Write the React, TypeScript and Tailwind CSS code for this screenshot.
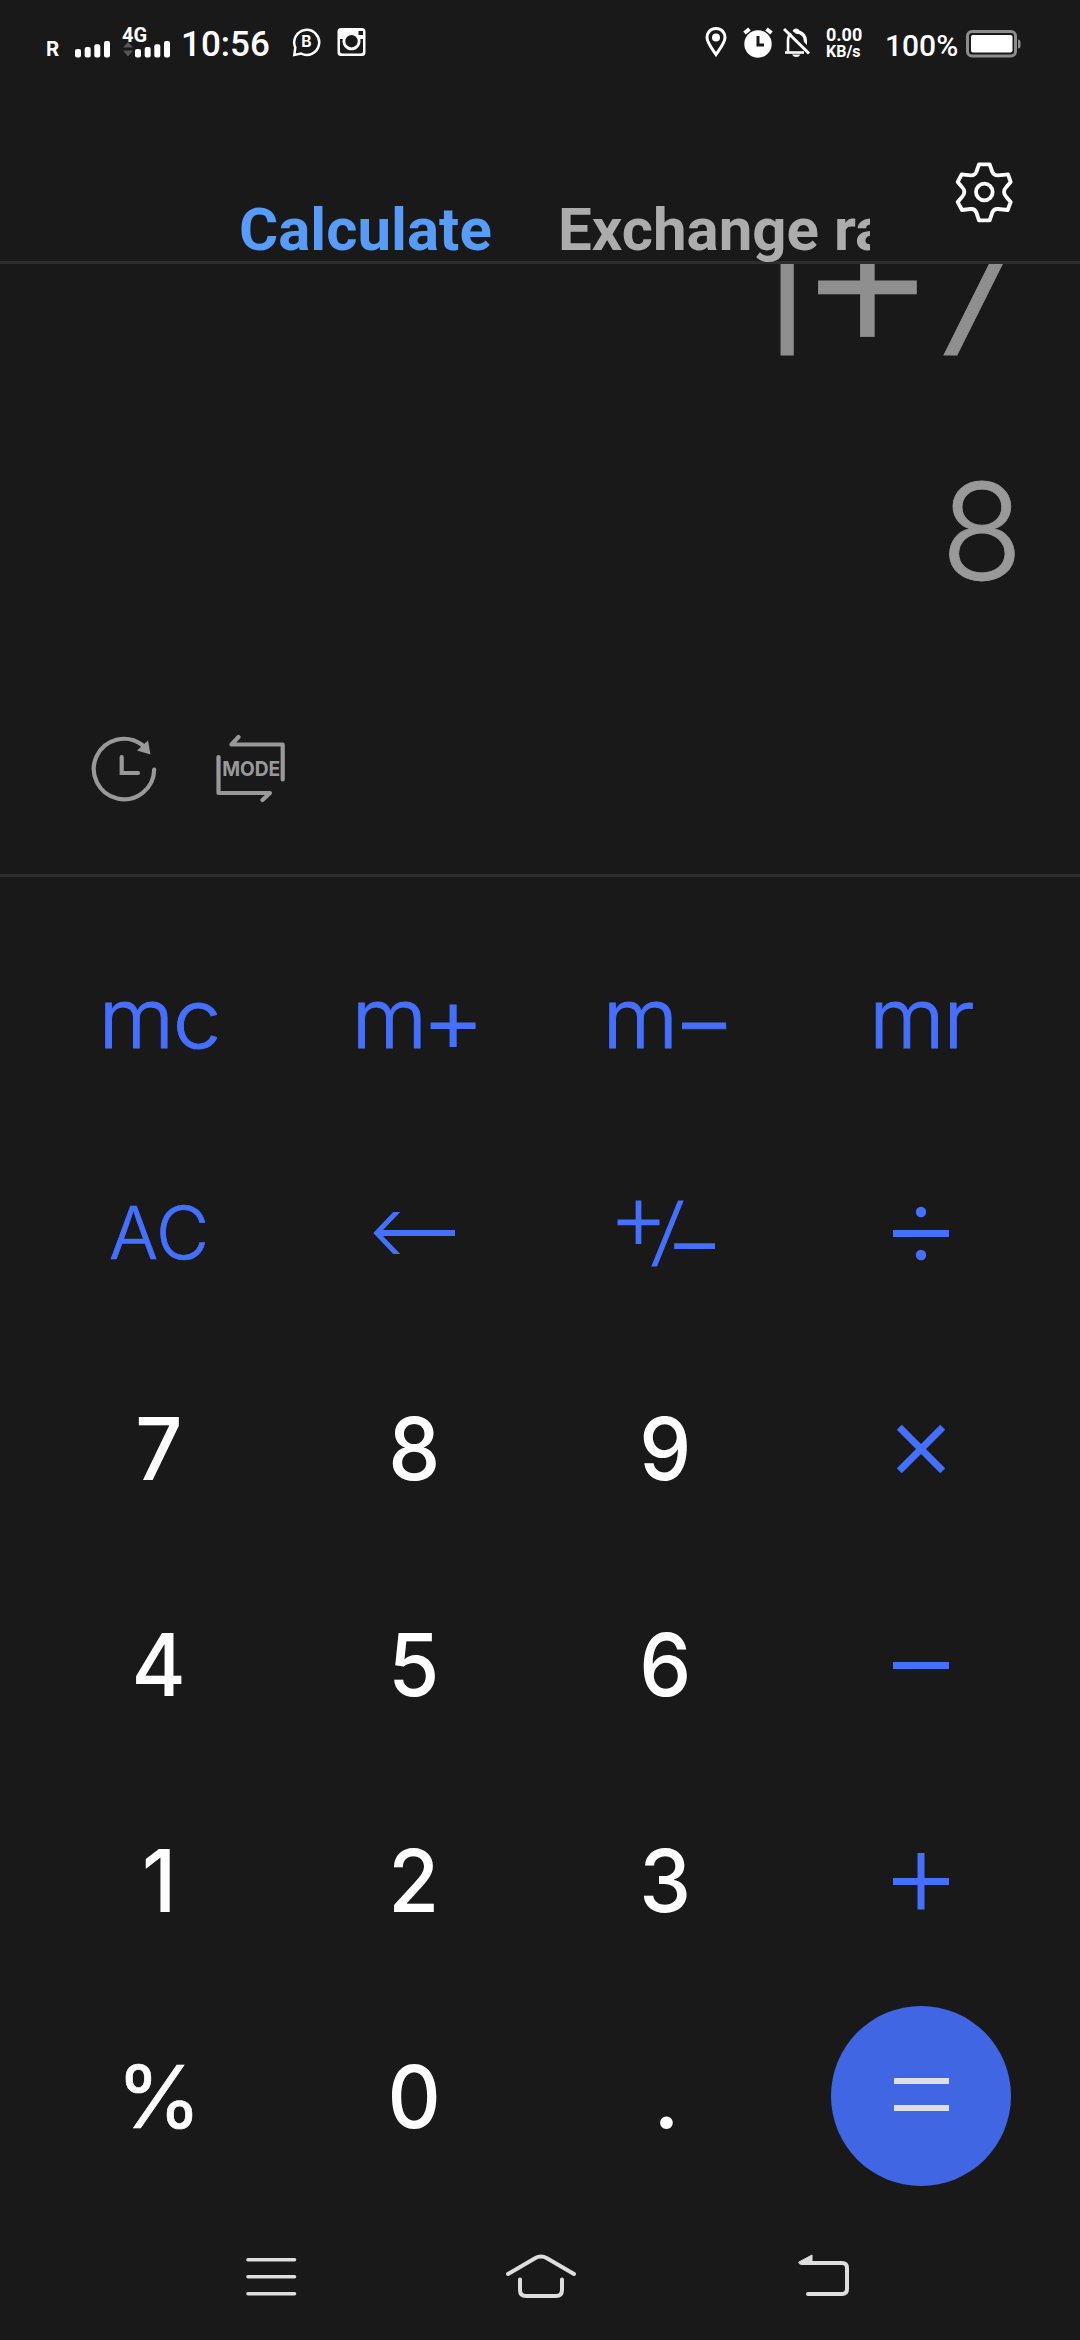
import type { ReactNode } from "react";

function SignalBars() {
  return (
    <svg className="h-[18px] w-[36px] fill-white" viewBox="0 0 36 18">
      <rect x="0" y="9" width="6" height="8.5" rx="2" />
      <rect x="9.7" y="7" width="6" height="10.5" rx="2" />
      <rect x="19.3" y="4.300" width="6" height="13.2" rx="2" />
      <rect x="29" y="1" width="6" height="16.500" rx="2" />
    </svg>
  );
}

function StatusBar() {
  return (
    <div className="flex h-[84px] items-start font-['Roboto',sans-serif] text-white">
      <span className="ml-[46px] mt-[39px] w-[29px] font-['Inter',sans-serif] text-[20px] font-bold leading-[20px]">R</span>
      <div className="mt-[39.500px] w-[47px]">
        <SignalBars />
      </div>
      <div className="mt-[25px] flex w-[59px] flex-col">
        <span className="h-[16px] whitespace-nowrap text-[20px] font-bold leading-[20px]">4G</span>
        <div className="-mt-[1px] flex">
          <svg className="h-[18px] w-[13px] fill-[#555]" viewBox="0 0 13 18">
            <path d="M6 2L11 7.500H1ZM6 16.500L11 10.500H1Z" />
          </svg>
          <SignalBars />
        </div>
      </div>
      <span className="mt-[24px] w-[111px] whitespace-nowrap text-[35px] font-medium leading-[41px]">10:56</span>
      <svg className="mt-[27px] h-[30px] w-[45px]" viewBox="0 0 45 30" fill="none" stroke="white" strokeWidth="2.500">
        <path d="M2.300 28L3.300 20.500A12.500 12.500 0 1 1 9 26.500Z" />
        <text x="14.5" y="20" textAnchor="middle" fontSize="15.500" fontWeight="700" fontFamily="Inter" fill="white" stroke="none">B</text>
      </svg>
      <svg className="mt-[27px] h-[30px] w-[30px]" viewBox="0 0 30 30">
        <path fillRule="evenodd" fill="white" d="M4 1H25Q28.500 1 28.500 4.500V25.500Q28.500 29 25 29H4Q0.500 29 0.500 25.500V4.500Q0.500 1 4 1ZM3 12V24Q3 26.500 5.500 26.500H23.500Q26 26.500 26 24V12H23.200A9 9 0 1 1 5.800 12ZM14.500 8A6.200 6.200 0 1 0 14.500 20.400A6.200 6.200 0 1 0 14.500 8ZM21.500 4V8H26V4Z" />
      </svg>
      <svg className="ml-auto mt-[26px] h-[32px] w-[38px]" viewBox="0 0 38 32">
        <path d="M11 2.500C5.500 2.500 2 6.500 2 11.300C2 17 7 22.500 11 28.500C15 22.500 20 17 20 11.300C20 6.500 16.500 2.500 11 2.500Z" fill="none" stroke="white" strokeWidth="3" />
        <circle cx="11" cy="11.500" r="4" fill="white" />
      </svg>
      <svg className="mt-[27px] h-[31px] w-[40px]" viewBox="0 0 40 31">
        <circle cx="15" cy="17" r="13.700" fill="white" />
        <path d="M1.500 6L6.500 2M23.500 2L28.500 6" stroke="white" strokeWidth="4" />
        <path d="M15 9V18H21" fill="none" stroke="#191919" strokeWidth="3" />
      </svg>
      <svg className="mt-[27px] h-[31px] w-[43px]" viewBox="0 0 43 31" fill="none" stroke="white" strokeWidth="2.600">
        <path d="M5 24.500V13Q5 9 8 6.500" />
        <path d="M2 25.500H21" />
        <path d="M1 2L26 26.500" strokeWidth="3" />
        <path d="M9 27.500H17.500Q16 30 13.200 30Q10.500 30 9 27.500Z" fill="white" stroke="none" />
        <path d="M9.500 4Q10.500 1.500 13 1.500T16.500 3.500Q23.800 6 24 13.500V18L21 15Q21 7 13 6.800Z" fill="white" stroke="none" />
      </svg>
      <div className="mt-[26px] flex w-[59px] flex-col whitespace-nowrap font-bold">
        <span className="text-[18px] leading-[18px]">0.00</span>
        <span className="text-[16px] leading-[16px]">KB/s</span>
      </div>
      <span className="mt-[28px] w-[81px] whitespace-nowrap text-[30px] font-medium leading-[36px]">100%</span>
      <svg className="mr-[58px] mt-[30px] h-[28px] w-[56px]" viewBox="0 0 56 28">
        <rect x="1.500" y="1.500" width="48" height="24.500" rx="4.500" fill="none" stroke="#8c8c8c" strokeWidth="3" />
        <rect x="5" y="5" width="41.500" height="17.500" rx="2" fill="white" />
        <path d="M52 9.500Q54.500 9.500 54.500 12V16Q54.500 18.500 52 18.500Z" fill="#8c8c8c" />
      </svg>
    </div>
  );
}

function Header() {
  return (
    <header className="flex h-[177px] justify-between">
      <nav className="relative z-10 flex w-[870px] items-end overflow-x-clip whitespace-nowrap pl-[239px] font-['Roboto',sans-serif] text-[60px] font-bold leading-[63px]">
        <span className="w-[319px] shrink-0 text-[#579cf8]">Calculate</span>
        <span className="shrink-0 text-[#acacac]">Exchange rate</span>
      </nav>
      <svg className="mr-[50px] mt-[66px] h-[90px] w-[90px]" viewBox="0 0 270 270" fill="none" stroke="white" strokeWidth="11.500" strokeLinejoin="round">
        <path d="M117 43H149L157 66Q162 77 174 76L204 73L212 96L199 111Q192 118 192 126Q192 134 199 141L212 156L203 180L174 177Q162 176 157 187L149 211H117L109 187Q104 176 92 177L66 180L53 156L66 141Q73 134 73 126Q73 118 66 111L53 96L65 73L92 76Q104 77 109 66Z" />
        <circle cx="133" cy="126" r="25" />
      </svg>
    </header>
  );
}

function Display() {
  return (
    <section className="flex h-[616px] flex-col overflow-hidden border-b-[3px] border-t-[3px] border-[#2c2c2c] font-['Inter',sans-serif] font-light">
      <div className="-mt-[74px] mr-[54px] flex h-[200px] shrink-0 justify-end text-[180px] leading-[200px] text-[#8f8f8f] [-webkit-text-stroke:0.8px_#8f8f8f]">
        <span className="translate-x-[3px] -translate-y-[18px] scale-y-[1.28]">1</span>
        <span className="-mx-[12px] translate-x-[1px] -translate-y-[20px] text-[217px]">+</span>
        <span>7</span>
      </div>
      <div className="mr-[57px] mt-[66px] flex h-[150px] shrink-0 justify-end text-[134px] leading-[150px] text-[#999] [-webkit-text-stroke:0.8px_#999]">
        <span>8</span>
      </div>
      <div className="ml-[88px] mt-[127px] flex gap-[56px]">
        <svg className="h-[72px] w-[72px]" viewBox="0 0 72 72" fill="none" stroke="#999" strokeWidth="4.200" strokeLinecap="round">
          <path d="M66.200 36.500A30.200 30.200 0 1 1 54 11.800" />
          <path d="M33.700 24V40H50" />
          <path d="M60 7.500L62.500 21.500L49 17.500Z" fill="#999" stroke="none" />
        </svg>
        <svg className="h-[72px] w-[72px]" viewBox="0 0 72 72" fill="none" stroke="#999" strokeWidth="4.200" strokeLinecap="round" strokeLinejoin="round">
          <path d="M22.500 4L15.500 11.500H66.700V46.500" />
          <path d="M2.500 24V60H54L46.500 67" />
          <text x="35.200" y="42.800" textAnchor="middle" textLength="58" lengthAdjust="spacingAndGlyphs" fontSize="20.500" fontWeight="700" fontFamily="Inter" fill="#999" stroke="none">MODE</text>
        </svg>
      </div>
    </section>
  );
}

const OP = "h-[72px] w-[90px] fill-none stroke-[#4570ff] stroke-[7]";

const Memory = ({ children, sign }: { children: ReactNode; sign?: string }) => (
  <div className="flex scale-x-[1.06] pt-[4px] text-[82px] font-light leading-[100px] text-[#4570ff] [-webkit-text-stroke:0.9px_#4570ff]">
    <span className="tracking-[-0.020em]">{children}</span>
    {sign && <span className="-ml-[4px] -mr-[8px] text-[92px]">{sign}</span>}
  </div>
);

const Digit = ({ children }: { children: ReactNode }) => (
  <span className="scale-x-95 text-[87px] font-medium leading-[100px] text-white">{children}</span>
);

const keys: ReactNode[] = [
  <Memory>mc</Memory>,
  <Memory sign="+">m</Memory>,
  <Memory sign="−">m</Memory>,
  <Memory>mr</Memory>,
  <span className="text-[73px] font-light leading-[90px] text-[#4570ff] [-webkit-text-stroke:0.7px_#4570ff]">AC</span>,
  <svg className="h-[72px] w-[90px] fill-[#4570ff]" viewBox="-45 -36 90 72">
    <path d="M-40.700 0L-20.700 -21H-13.700L-31 -3H41V3H-31L-13.700 21H-20.700Z" />
  </svg>,
  <svg className="h-[72px] w-[110px] fill-none stroke-[#4570ff] stroke-[5.700]" viewBox="-55 -36 110 72">
    <path d="M-47.500 -10.700H-5.500M-26.500 -32.500V11M9.200 13.200H50" />
    <path d="M13 -32.500H18.700L-8 33.500H-13.700Z" className="fill-[#4570ff] stroke-none" />
  </svg>,
  <svg className={OP} viewBox="-45 -36 90 72">
    <path d="M-28 0.500H28" />
    <circle cy="-21" r="5.200" className="fill-[#4570ff] stroke-none" />
    <circle cy="22" r="5.200" className="fill-[#4570ff] stroke-none" />
  </svg>,
  <Digit>7</Digit>,
  <Digit>8</Digit>,
  <Digit>9</Digit>,
  <svg className={OP} viewBox="-45 -36 90 72">
    <path d="M-21.700 -21.700L21.700 21.700M21.700 -21.700L-21.700 21.700" />
  </svg>,
  <Digit>4</Digit>,
  <Digit>5</Digit>,
  <Digit>6</Digit>,
  <svg className={OP} viewBox="-45 -36 90 72">
    <path d="M-28 0.500H28" />
  </svg>,
  <Digit>1</Digit>,
  <Digit>2</Digit>,
  <Digit>3</Digit>,
  <svg className={OP} viewBox="-45 -36 90 72">
    <path d="M-28 0.500H28M0 -28V28.500" />
  </svg>,
  <span className="text-[87px] font-normal leading-[100px] text-white [-webkit-text-stroke:0.6px_white]">%</span>,
  <Digit>0</Digit>,
  <span className="pl-[3px] text-[87px] font-medium leading-[100px] text-white">.</span>,
  <div className="mb-[3px] flex h-[180px] w-[180px] flex-col items-center justify-center gap-[21px] rounded-full bg-[#4066e4] pb-[2px]">
    <div className="h-[6px] w-[55px] bg-[#dfdfe3]" />
    <div className="h-[6px] w-[55px] bg-[#dfdfe3]" />
  </div>,
];

function Keypad() {
  return (
    <main className="grid grid-cols-[256px_254px_248px_264px] auto-rows-[216px] pl-[31px] pt-[32px] font-['Inter',sans-serif]">
      {keys.map((key, i) => (
        <div key={i} className="flex items-center justify-center">
          {key}
        </div>
      ))}
    </main>
  );
}

function NavBar() {
  return (
    <footer className="flex h-[100px] shrink-0 pl-[245px] pt-[44px]">
      <svg className="h-[50px] w-[52px] shrink-0 fill-none stroke-[#dedede] stroke-[3.600]" viewBox="0 0 52 50" strokeLinecap="round">
        <path d="M3 10.700H49.500M3 27.700H49.500M3 44.700H49.500" />
      </svg>
      <svg className="ml-[208px] h-[50px] w-[72px] shrink-0 fill-none stroke-[#dedede] stroke-[4]" viewBox="0 0 72 50" strokeLinecap="round">
        <path d="M3 25L30 9.200Q36 6 42 9.200L69 25" />
        <path d="M15 30.500V41Q15 47 21 47H51Q57 47 57 41V30.500" />
      </svg>
      <svg className="ml-[221px] h-[50px] w-[52px] shrink-0 fill-none stroke-[#dedede] stroke-[4]" viewBox="0 0 52 50" strokeLinecap="round" strokeLinejoin="round">
        <path d="M4 14H44Q49 14 49 19V40Q49 45 44 45H10" />
        <path d="M1 13L14 6V15H2Z" className="fill-[#dedede] stroke-[1]" />
      </svg>
    </footer>
  );
}

export default function App() {
  return (
    <div className="h-[2340px] w-[1080px] overflow-hidden bg-[#191919]">
      <StatusBar />
      <Header />
      <Display />
      <Keypad />
      <NavBar />
    </div>
  );
}
